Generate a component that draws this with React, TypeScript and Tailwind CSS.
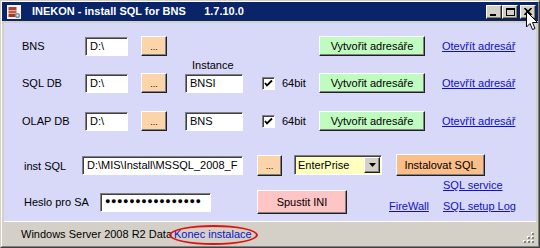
import React from 'react';

const raised =
  'border border-t-white border-l-white border-r-[#202020] border-b-[#202020] shadow-[inset_-1px_-1px_0_#808080]';
const sunken =
  'border border-t-[#808080] border-l-[#808080] border-r-white border-b-white shadow-[inset_1px_1px_0_#404040]';

function TextBox({ w, value, className = '' }: { w: string; value: string; className?: string }) {
  return (
    <div className={`${w} h-[19px] bg-white ${sunken} pl-[4px] pt-[1px] text-[11px] leading-[15px] text-black whitespace-nowrap overflow-hidden ${className}`}>
      {value}
    </div>
  );
}

function Btn({ w, h, bg, children, className = '' }: { w: string; h: string; bg: string; children: React.ReactNode; className?: string }) {
  return (
    <div className={`${w} ${h} ${bg} ${raised} flex items-center justify-center text-[11px] text-black shrink-0 ${className}`}>
      {children}
    </div>
  );
}

function Link({ children, className = '' }: { children: React.ReactNode; className?: string }) {
  return <span className={`text-[11px] text-[#1010c8] underline underline-offset-[1px] whitespace-nowrap ${className}`}>{children}</span>;
}

function Check() {
  return (
    <div className={`w-[13px] h-[13px] bg-white ${sunken} flex items-center justify-center shrink-0`}>
      <svg width="9" height="9" viewBox="0 0 9 9">
        <path d="M1 4 L3 6.5 L8 1.5" stroke="#000" strokeWidth="1.8" fill="none" />
      </svg>
    </div>
  );
}

function WinBtn({ children, className = '' }: { children: React.ReactNode; className?: string }) {
  return <div className={`w-[16px] h-[14px] bg-[#d4d0c8] ${raised} flex items-center justify-center ${className}`}>{children}</div>;
}

export default function App() {
  return (
    <div className="w-[540px] h-[248px] overflow-hidden relative border border-t-[#d4d0c8] border-l-[#d4d0c8] border-r-[#404040] border-b-[#404040] bg-[#d4d0c8] font-['Liberation_Sans',Arial,sans-serif]">
      <div className="h-full border border-t-white border-l-white border-r-[#808080] border-b-[#808080] flex flex-col">
        {/* title bar */}
        <div className="h-[19px] bg-[#0a246a] flex items-center pl-[5px] pr-[2px] shrink-0">
          <svg width="14" height="14" viewBox="0 0 14 14" className="shrink-0">
            <rect x="0" y="0" width="14" height="14" fill="#f4f4f4" />
            <rect x="1.5" y="2" width="8" height="3" fill="#b04030" />
            <rect x="1.5" y="5.5" width="8" height="3" fill="#c85a40" />
            <rect x="1.5" y="9" width="8" height="3" fill="#a03828" />
            <circle cx="10.5" cy="10.5" r="2.6" fill="#8090a8" />
            <circle cx="10.5" cy="10.5" r="1" fill="#f4f4f4" />
          </svg>
          <span className="ml-[11px] text-white font-bold text-[11px] whitespace-pre">INEKON - install SQL for BNS      1.7.10.0</span>
          <div className="ml-auto flex items-center">
            <WinBtn>
              <div className="w-[6px] h-[2px] bg-black mt-[6px] -ml-[2px]" />
            </WinBtn>
            <WinBtn>
              <div className="w-[9px] h-[8px] border border-black border-t-2" />
            </WinBtn>
            <WinBtn className="ml-[2px]">
              <svg width="8" height="7" viewBox="0 0 8 7">
                <path d="M0.5 0 L7.5 7 M7.5 0 L0.5 7" stroke="#000" strokeWidth="1.6" />
              </svg>
            </WinBtn>
          </div>
        </div>

        {/* client area */}
        <div className="mt-[2px] mx-[2px] h-[198px] bg-[#d8d8f8] flex flex-col pt-[11px] pl-[18px] text-[11px] text-black shrink-0">
          {/* BNS */}
          <div className="h-[24px] flex items-center">
            <span className="w-[63px]">BNS</span>
            <TextBox w="w-[43px]" value="D:\" />
            <Btn w="w-[26px]" h="h-[20px]" bg="bg-[#fcd4aa]" className="ml-[13px]">
              <span className="text-[9px] mt-[4px]">...</span>
            </Btn>
            <Btn w="w-[106px]" h="h-[20px]" bg="bg-[#c0fcc0]" className="ml-[152px]">Vytvořit adresáře</Btn>
            <Link className="ml-[17px]">Otevřít adresář</Link>
          </div>
          <div className="h-[14px] flex items-center">
            <span className="ml-[170px]">Instance</span>
          </div>
          {/* SQL DB */}
          <div className="h-[22px] flex items-center">
            <span className="w-[63px]">SQL DB</span>
            <TextBox w="w-[43px]" value="D:\" />
            <Btn w="w-[26px]" h="h-[20px]" bg="bg-[#fcd4aa]" className="ml-[13px]">
              <span className="text-[9px] mt-[4px]">...</span>
            </Btn>
            <TextBox w="w-[58px]" value="BNSI" className="ml-[18px]" />
            <div className="ml-[19px]"><Check /></div>
            <span className="ml-[7px] w-[37px]">64bit</span>
            <Btn w="w-[106px]" h="h-[20px]" bg="bg-[#c0fcc0]">Vytvořit adresáře</Btn>
            <Link className="ml-[17px]">Otevřít adresář</Link>
          </div>
          {/* OLAP DB */}
          <div className="h-[22px] mt-[16px] flex items-center">
            <span className="w-[63px]">OLAP DB</span>
            <TextBox w="w-[43px]" value="D:\" />
            <Btn w="w-[26px]" h="h-[20px]" bg="bg-[#fcd4aa]" className="ml-[13px]">
              <span className="text-[9px] mt-[4px]">...</span>
            </Btn>
            <TextBox w="w-[58px]" value="BNS" className="ml-[18px]" />
            <div className="ml-[19px]"><Check /></div>
            <span className="ml-[7px] w-[37px]">64bit</span>
            <Btn w="w-[106px]" h="h-[20px]" bg="bg-[#c0fcc0]">Vytvořit adresáře</Btn>
            <Link className="ml-[17px]">Otevřít adresář</Link>
          </div>
          {/* inst SQL */}
          <div className="h-[22px] mt-[22px] flex items-center">
            <span className="w-[60px] pl-[2px] pt-[3px]">inst SQL</span>
            <TextBox w="w-[161px]" value="D:\MIS\Install\MSSQL_2008_F" />
            <Btn w="w-[25px]" h="h-[21px]" bg="bg-[#fcd4aa]" className="ml-[14px]">
              <span className="text-[9px] mt-[4px]">...</span>
            </Btn>
            <div className={`ml-[12px] w-[88px] h-[20px] bg-[#ffffc0] ${sunken} flex items-center`}>
              <span className="pl-[3px] flex-1 text-[11px]">EnterPrise</span>
              <div className={`w-[16px] h-[16px] mr-[1px] bg-[#d4d0c8] ${raised} flex items-center justify-center`}>
                <svg width="7" height="4" viewBox="0 0 7 4">
                  <path d="M0 0 H7 L3.5 4 Z" fill="#000" />
                </svg>
              </div>
            </div>
            <Btn w="w-[89px]" h="h-[22px]" bg="bg-[#fcbe88]" className="ml-[14px]">Instalovat SQL</Btn>
          </div>
          <div className="h-[18px] flex items-center">
            <Link className="ml-[421px]">SQL service</Link>
          </div>
          {/* Heslo */}
          <div className="h-[22px] -mt-[3px] flex items-center">
            <span className="w-[78px] pl-[2px]">Heslo pro SA</span>
            <div className={`w-[111px] h-[19px] bg-white ${sunken} pl-[4px] flex items-center text-[9px] tracking-[0.6px] text-black`}>
              ●●●●●●●●●●●●●●●●
            </div>
            <Btn w="w-[90px]" h="h-[24px]" bg="bg-[#ffc4c4]" className="ml-[46px]">Spustit INI</Btn>
            <Link className="ml-[42px] w-[54px] mt-[8px]">FireWall</Link>
            <Link className="mt-[8px]">SQL setup Log</Link>
          </div>
        </div>

        {/* status bar */}
        <div className="relative mx-[2px] h-[23px] border-t border-t-white bg-[#d4d0c8] flex items-center pl-[17px] pt-[3px] text-[11px] shrink-0">
          <span className="w-[153px] text-black whitespace-nowrap">Windows Server 2008 R2 Data</span>
          <span className="text-[#1010c8] whitespace-nowrap">Konec instalace</span>
          <div className="absolute left-[165px] top-[3px] w-[89px] h-[20px] rounded-[50%] border-2 border-[#e01010]" />
          <svg width="12" height="12" viewBox="0 0 12 12" className="absolute right-[2px] bottom-[1px]">
            {[
              [10, 2], [10, 6], [6, 6], [10, 10], [6, 10], [2, 10],
            ].map(([x, y], i) => (
              <g key={i}>
                <rect x={x - 1} y={y - 1} width="2" height="2" fill="#fff" />
                <rect x={x} y={y} width="2" height="2" fill="#808080" />
              </g>
            ))}
          </svg>
        </div>
      </div>

      {/* mouse cursor */}
      <svg width="13" height="20" viewBox="0 0 13 20" className="absolute left-[525px] top-[10px]">
        <path d="M0.5 0.5 V16 L4 12.5 L6.5 18.5 L9 17.5 L6.5 11.5 L11.5 11.5 Z" fill="#fff" stroke="#000" strokeWidth="1" />
      </svg>
    </div>
  );
}
